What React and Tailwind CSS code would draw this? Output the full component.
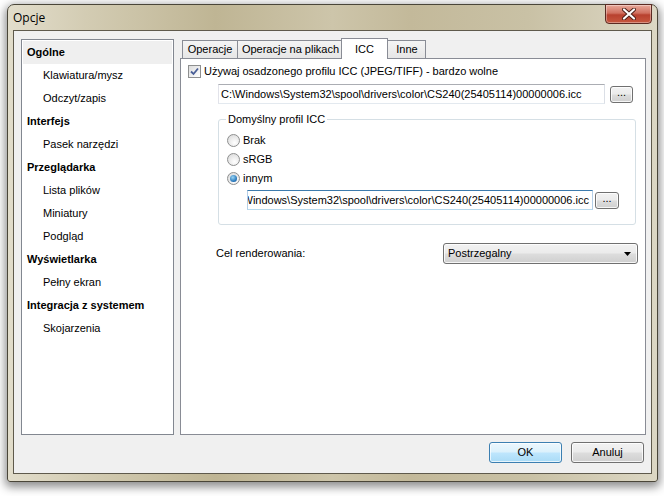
import React from 'react';

const ff = "font-['Liberation_Sans',Arial,sans-serif]";

const tree = [
  { label: 'Ogólne', head: true, sel: true },
  { label: 'Klawiatura/mysz' },
  { label: 'Odczyt/zapis' },
  { label: 'Interfejs', head: true },
  { label: 'Pasek narzędzi' },
  { label: 'Przeglądarka', head: true },
  { label: 'Lista plików' },
  { label: 'Miniatury' },
  { label: 'Podgląd' },
  { label: 'Wyświetlarka', head: true },
  { label: 'Pełny ekran' },
  { label: 'Integracja z systemem', head: true },
  { label: 'Skojarzenia' },
];

function WinButton({ children, className = '', primary }) {
  return (
    <div
      className={`flex items-center justify-center rounded-[3px] border text-[11px] text-black ${
        primary
          ? 'border-[#3c7fb1] bg-[linear-gradient(#ecf7fd_0%,#dbf1fc_48%,#bee6fd_52%,#a9dbf6_100%)] shadow-[inset_0_0_0_1px_rgba(255,255,255,0.7)]'
          : 'border-[#707070] bg-[linear-gradient(#f2f2f2_0%,#ebebeb_48%,#dddddd_52%,#cfcfcf_100%)] shadow-[inset_0_0_0_1px_rgba(255,255,255,0.8)]'
      } ${className}`}
    >
      {children}
    </div>
  );
}

function Radio({ checked }) {
  return (
    <div className="w-[13px] h-[13px] rounded-full border border-[#8e8f8f] bg-[radial-gradient(circle_at_60%_70%,#ffffff,#d6d6d6)] flex items-center justify-center">
      {checked && (
        <div className="w-[7px] h-[7px] rounded-full bg-[radial-gradient(circle_at_40%_35%,#9ad6f5,#1f6fb5_70%,#0d3f7a)]" />
      )}
    </div>
  );
}

function Checkbox() {
  return (
    <div className="w-[13px] h-[13px] border border-[#8e8f8f] bg-[linear-gradient(135deg,#dcdcdc,#ffffff)] flex items-center justify-center">
      <svg width="9" height="9" viewBox="0 0 9 9">
        <path d="M1 4.5 L3.5 7 L8 1.5" fill="none" stroke="#4a5f97" strokeWidth="1.8" />
      </svg>
    </div>
  );
}

export default function App() {
  return (
    <div className={`w-[664px] h-[496px] bg-white pt-[4px] pl-[7px] ${ff}`}>
      {/* okno */}
      <div className="w-[651px] h-[478px] rounded-t-[7px] rounded-b-[3px] border border-[#4a4639] bg-[linear-gradient(90deg,#e2ddcb_0%,#d3ccb3_12%,#bfb594_32%,#cdc5aa_50%,#c3b99a_62%,#c9c1a5_80%,#dcd7c4_100%)] shadow-[0_3px_10px_2px_rgba(0,0,0,0.45)] flex flex-col px-[5px] pb-[7px]">
        {/* pasek tytułu */}
        <div className="relative h-[25px] flex items-center pl-[0px]">
          <span className="text-[12px] text-black font-['Open_Sans',Arial,sans-serif] mt-[1px]">Opcje</span>
          <div className="absolute right-[0px] top-[-1px] w-[47px] h-[20px] rounded-b-[4px] border border-[#5b2a22] bg-[linear-gradient(#e9a99b_0%,#d0705f_45%,#b8412f_55%,#c7583f_100%)] shadow-[inset_0_0_0_1px_rgba(255,255,255,0.35)] flex items-center justify-center">
            <svg width="14" height="12" viewBox="0 0 14 12">
              <path d="M2 1.5 L12 10.5 M12 1.5 L2 10.5" stroke="#4a1d15" strokeWidth="4" strokeLinecap="round" />
              <path d="M2 1.5 L12 10.5 M12 1.5 L2 10.5" stroke="#ffffff" strokeWidth="2.2" strokeLinecap="round" />
            </svg>
          </div>
        </div>

        {/* obszar klienta */}
        <div className="flex-1 border border-[#5f5a4c] bg-[#f0f0f0] flex flex-col">
          <div className="flex items-start pt-[7px]">
            {/* drzewo */}
            <div className="ml-[7px] mt-[1px] w-[153px] h-[396px] border border-[#828790] bg-white pt-[1px] px-[1px]">
              {tree.map((t) => (
                <div
                  key={t.label}
                  className={`h-[23px] flex items-center text-[11px] text-black ${
                    t.head ? 'font-bold pl-[4px]' : 'pl-[20px]'
                  } ${t.sel ? 'bg-[#efefef]' : ''}`}
                >
                  {t.label}
                </div>
              ))}
            </div>

            {/* zakładki */}
            <div className="ml-[6px] w-[466px] flex flex-col">
              <div className="h-[20px] flex items-start pl-[2px] text-[11px] text-black">
                <div className="mt-[2px] h-[18px] w-[56px] border border-b-0 border-[#898c95] bg-[linear-gradient(#f4f4f4,#e6e6e6)] flex items-center justify-center">
                  Operacje
                </div>
                <div className="-ml-px mt-[2px] h-[18px] w-[107px] border border-b-0 border-[#898c95] bg-[linear-gradient(#f4f4f4,#e6e6e6)] flex items-center justify-center">
                  Operacje na plikach
                </div>
                <div className="relative z-10 -ml-[3px] h-[21px] w-[47px] border border-b-0 border-[#898c95] bg-white flex items-start justify-center pt-[2px]">
                  ICC
                </div>
                <div className="-ml-[2px] mt-[2px] h-[18px] w-[40px] border border-b-0 border-[#898c95] bg-[linear-gradient(#f4f4f4,#e6e6e6)] flex items-center justify-center pl-[2px]">
                  Inne
                </div>
              </div>
              <div className="h-[377px] border border-[#898c95] bg-white text-[11px] text-black">
                <div className="mt-[6px] ml-[7px] flex items-center h-[13px]">
                  <Checkbox />
                  <span className="ml-[3px]">Używaj osadzonego profilu ICC (JPEG/TIFF) - bardzo wolne</span>
                </div>

                <div className="mt-[6px] ml-[37px] flex items-center">
                  <div className="w-[387px] h-[20px] border border-[#abadb3] border-l-[#e2e3ea] border-r-[#dbdfe6] border-b-[#e3e9ef] flex items-center pl-[2px] whitespace-nowrap overflow-hidden">
                    C:\Windows\System32\spool\drivers\color\CS240(25405114)00000006.icc
                  </div>
                  <WinButton className="ml-[5px] w-[23px] h-[17px] leading-none pb-[3px]">...</WinButton>
                </div>

                {/* grupa */}
                <div className="relative mt-[15px] ml-[37px] w-[418px] h-[106px] border border-[#d5dfe5] rounded-[3px] pt-[14px] pl-[8px]">
                  <span className="absolute left-[7px] top-[-8px] bg-white px-[2px] leading-[14px]">Domyślny profil ICC</span>
                  <div className="flex flex-col gap-[6px]">
                    <div className="flex items-center h-[13px]">
                      <Radio />
                      <span className="ml-[3px]">Brak</span>
                    </div>
                    <div className="flex items-center h-[13px]">
                      <Radio />
                      <span className="ml-[3px]">sRGB</span>
                    </div>
                    <div className="flex items-center h-[13px]">
                      <Radio checked />
                      <span className="ml-[3px]">innym</span>
                    </div>
                  </div>
                  <div className="mt-[5px] ml-[20px] flex items-center">
                    <div className="w-[346px] h-[20px] border border-[#3d7bad] border-l-[#b5cfe7] border-r-[#b5cfe7] border-b-[#b7d9ed] flex items-center justify-end pr-[3px] whitespace-nowrap overflow-hidden">
                      <span>C:\Windows\System32\spool\drivers\color\CS240(25405114)000000</span>
                      <span className="inline-block w-px h-[13px] bg-[#1d4f9a]" />
                      <span>06.icc</span>
                    </div>
                    <WinButton className="ml-[2px] w-[24px] h-[17px] leading-none pb-[3px]">...</WinButton>
                  </div>
                </div>

                <div className="mt-[18px] ml-[35px] flex items-center">
                  <span className="w-[227px]">Cel renderowania:</span>
                  <WinButton className="w-[195px] h-[21px] !justify-between pl-[4px] pr-[6px]">
                    <span>Postrzegalny</span>
                    <svg width="7" height="4" viewBox="0 0 7 4">
                      <path d="M0 0 H7 L3.5 4 Z" fill="#000" />
                    </svg>
                  </WinButton>
                </div>
              </div>
            </div>
          </div>

          {/* przyciski */}
          <div className="flex justify-end gap-[9px] pr-[7px] mt-[7px]">
            <WinButton primary className="w-[73px] h-[21px]">OK</WinButton>
            <WinButton className="w-[73px] h-[21px]">Anuluj</WinButton>
          </div>
        </div>
      </div>
    </div>
  );
}
